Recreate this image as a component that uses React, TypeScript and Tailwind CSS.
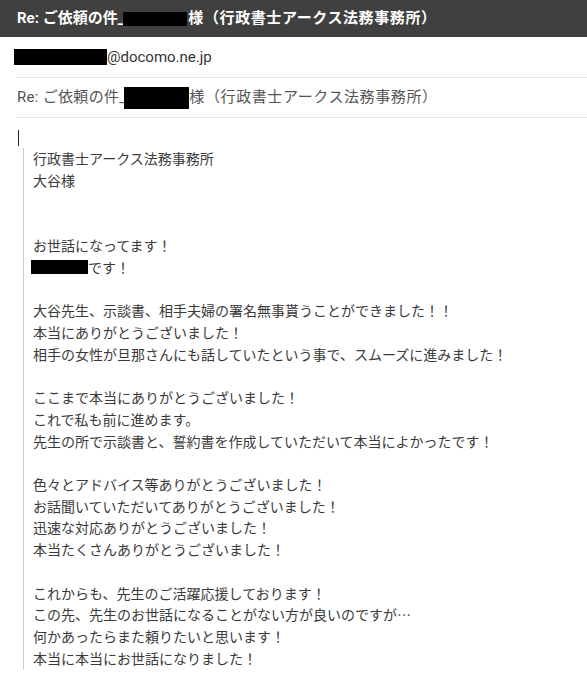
const bodyFont = { fontFamily: '"Noto Sans CJK JP", "Noto Sans", sans-serif' }

function Redact({ w, h, className = '' }: { w: string; h: string; className?: string }) {
  return <span className={`inline-block bg-black align-middle ${w} ${h} ${className}`} />
}

const lines: (string | null)[] = [
  '行政書士アークス法務事務所',
  '大谷様',
  '',
  '',
  'お世話になってます！',
  null,
  '',
  '大谷先生、示談書、相手夫婦の署名無事貰うことができました！！',
  '本当にありがとうございました！',
  '相手の女性が旦那さんにも話していたという事で、スムーズに進みました！',
  '',
  'ここまで本当にありがとうございました！',
  'これで私も前に進めます。',
  '先生の所で示談書と、誓約書を作成していただいて本当によかったです！',
  '',
  '色々とアドバイス等ありがとうございました！',
  'お話聞いていただいてありがとうございました！',
  '迅速な対応ありがとうございました！',
  '本当たくさんありがとうございました！',
  '',
  'これからも、先生のご活躍応援しております！',
  'この先、先生のお世話になることがない方が良いのですが…',
  '何かあったらまた頼りたいと思います！',
  '本当に本当にお世話になりました！',
]

export default function App() {
  return (
    <div className="w-[587px] h-[675px] overflow-hidden bg-white" style={{ fontFamily: '"Roboto", "Noto Sans CJK JP", sans-serif' }}>
      <div className="h-[37px] bg-[#404040] flex items-center pl-[17px] text-white text-[15px] font-bold whitespace-nowrap">
        <span>Re: ご依頼の件_</span>
        <Redact w="w-[64px]" h="h-[14px]" className="-ml-[1px]" />
        <span className="ml-[1px] tracking-[0.6px]">様（行政書士アークス法務事務所）</span>
      </div>

      <div className="h-[40px] flex items-center pl-[14px] text-[15px] text-[#333]">
        <Redact w="w-[93px]" h="h-[16px]" />
        <span>@docomo.ne.jp</span>
      </div>
      <div className="ml-[16px] h-px bg-[#e8e8e8]" />

      <div className="h-[39px] flex items-center pl-[17px] text-[15px] text-[#555] whitespace-nowrap">
        <span className="tracking-[0.3px]">Re: ご依頼の件_</span>
        <Redact w="w-[65px]" h="h-[22px]" className="-ml-[2px]" />
        <span className="tracking-[0.6px]">様（行政書士アークス法務事務所）</span>
      </div>
      <div className="ml-[16px] h-px bg-[#e8e8e8]" />

      <div className="pt-[12px] pl-[18px]">
        <div className="w-px h-[16px] bg-[#222]" />
      </div>

      <div className="mt-[2px] ml-[23px] border-l border-[#cccccc] pl-[9px] text-[14px] leading-[21.74px] text-[#3a3a3a] whitespace-nowrap" style={bodyFont}>
        {lines.map((l, i) =>
          l === null ? (
            <div key={i} className="flex items-center h-[21.74px]">
              <Redact w="w-[57px]" h="h-[14px]" className="-ml-[2px] mt-[-2px]" />
              <span>です！</span>
            </div>
          ) : (
            <div key={i} className="h-[21.74px]">{l}</div>
          ),
        )}
      </div>
    </div>
  )
}
